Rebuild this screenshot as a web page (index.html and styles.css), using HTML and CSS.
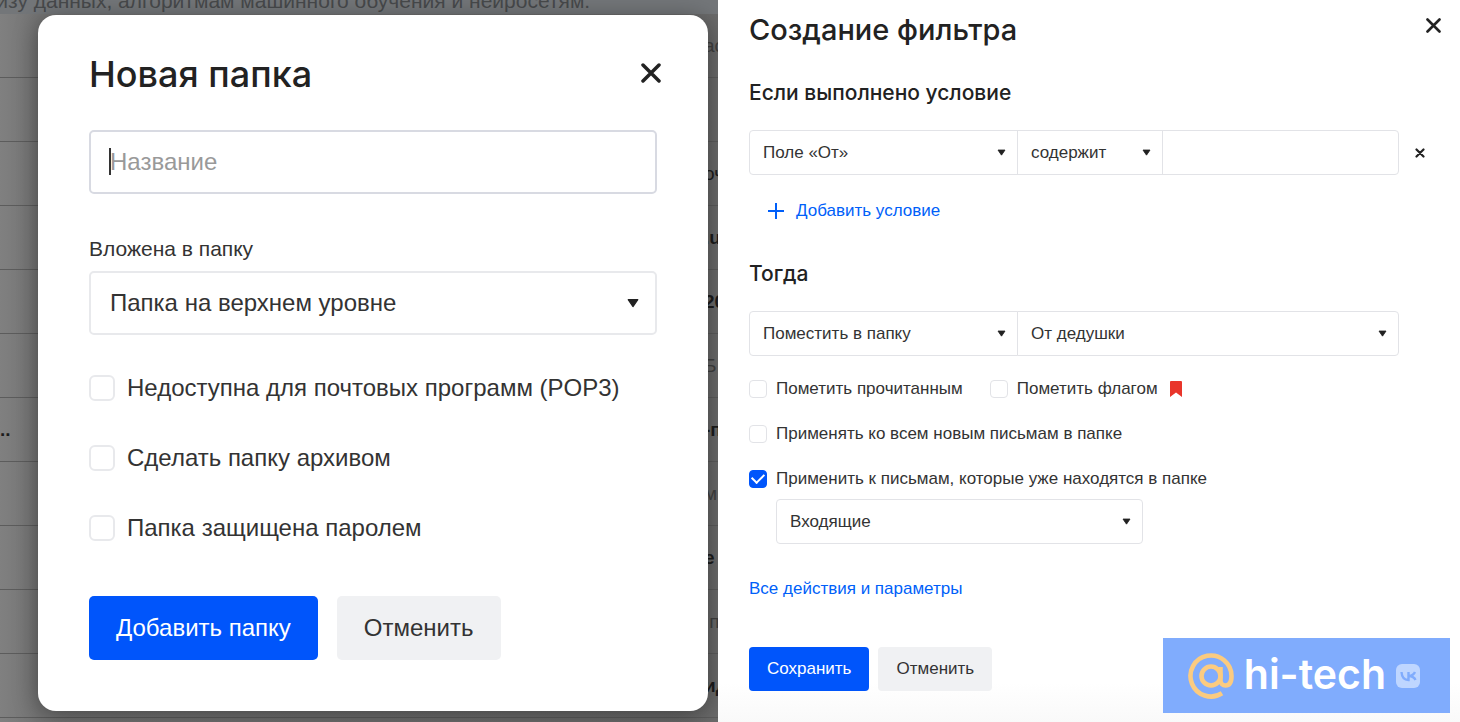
FILE: index.html
```html
<!DOCTYPE html>
<html lang="ru">
<head>
<meta charset="utf-8">
<title>Новая папка и создание фильтра</title>
<link rel="stylesheet" href="styles.css">
</head>
<body>
<svg class="defs" aria-hidden="true">
  <symbol id="arrow" viewBox="0 0 10 8"><path d="M1 1.2h8L5 7z" fill="#222" stroke="#222" stroke-linejoin="round"/></symbol>
  <symbol id="cross" viewBox="0 0 20 20"><path d="M2 2l16 16M18 2l-16 16" fill="none" stroke="#222" stroke-width="3.500" stroke-linecap="round"/></symbol>
  <symbol id="cross-bold" viewBox="0 0 10 10"><path d="M1.500 1.500l7 7M8.500 1.500l-7 7" fill="none" stroke="#222" stroke-width="2.200" stroke-linecap="round"/></symbol>
</svg>
<main class="page">
  <section class="folder">
    <div class="mail" aria-hidden="true">
      <div class="mail-top">лизу данных, алгоритмам машинного обучения и нейросетям.</div>
      <div class="mail-row"><span></span><span class="soft">ас</span></div>
      <div class="mail-row"></div>
      <div class="mail-row"><span></span><span>оч</span></div>
      <div class="mail-row"><span></span><b>.u</b></div>
      <div class="mail-row"><span></span><b>20</b></div>
      <div class="mail-row"><span></span><span class="soft">Б</span></div>
      <div class="mail-row"><b>..</b><b>-п</b></div>
      <div class="mail-row"><span></span><span class="soft">м</span></div>
      <div class="mail-row"><span></span><b>е</b></div>
      <div class="mail-row"><span></span><span class="soft">&nbsp;п</span></div>
      <div class="mail-row"><span></span><b>ид</b></div>
      <div class="mail-row last"></div>
    </div>
    <form class="modal">
      <header class="modal-head">
        <h1 class="modal-title">Новая папка</h1>
        <button class="close" type="button" aria-label="Закрыть"><svg class="cross-large"><use href="#cross"/></svg></button>
      </header>
      <div class="modal-body">
        <div class="name-box">
          <input class="field" type="text" placeholder="Название" aria-label="Название">
          <span class="caret"></span>
        </div>
        <label class="caption" for="parent">Вложена в папку</label>
        <div class="select">
          <select id="parent"><option>Папка на верхнем уровне</option></select>
          <svg class="arrow"><use href="#arrow"/></svg>
        </div>
        <div class="options">
          <label class="check"><input type="checkbox">Недоступна для почтовых программ (POP3)</label>
          <label class="check"><input type="checkbox">Сделать папку архивом</label>
          <label class="check"><input type="checkbox">Папка защищена паролем</label>
        </div>
        <div class="buttons">
          <button class="btn primary" type="button">Добавить папку</button>
          <button class="btn" type="button">Отменить</button>
        </div>
      </div>
    </form>
  </section>

  <section class="filter">
    <form class="filter-form">
      <header class="filter-head">
        <h1 class="filter-title">Создание фильтра</h1>
        <button class="close" type="button" aria-label="Закрыть"><svg class="cross-medium"><use href="#cross"/></svg></button>
      </header>
      <h2 class="subtitle">Если выполнено условие</h2>
      <div class="condition">
        <div class="group three">
          <div class="select">
            <select aria-label="Поле"><option>Поле «От»</option></select>
            <svg class="arrow"><use href="#arrow"/></svg>
          </div>
          <div class="select">
            <select aria-label="Условие"><option>содержит</option></select>
            <svg class="arrow"><use href="#arrow"/></svg>
          </div>
          <div class="value"><input class="field" type="text" aria-label="Значение"></div>
        </div>
        <button class="close" type="button" aria-label="Удалить условие"><svg class="cross-small"><use href="#cross-bold"/></svg></button>
      </div>
      <button class="add" type="button">
        <svg class="plus" viewBox="0 0 16 16"><path d="M8 0v16M0 8h16" stroke="#005ff9" stroke-width="2"/></svg>
        Добавить условие
      </button>
      <h2 class="subtitle then">Тогда</h2>
      <div class="group two">
        <div class="select">
          <select aria-label="Действие"><option>Поместить в папку</option></select>
          <svg class="arrow"><use href="#arrow"/></svg>
        </div>
        <div class="select">
          <select aria-label="Папка"><option>От дедушки</option></select>
          <svg class="arrow"><use href="#arrow"/></svg>
        </div>
      </div>
      <div class="filter-options">
        <div class="pair">
          <label class="check"><input type="checkbox">Пометить прочитанным</label>
          <label class="check"><input type="checkbox">Пометить флагом
            <svg class="flag" viewBox="0 0 12 16"><path d="M1 0h10q1 0 1 1v15l-6-4.500-6 4.500V1q0-1 1-1z" fill="#e9352b"/></svg>
          </label>
        </div>
        <label class="check"><input type="checkbox">Применять ко всем новым письмам в папке</label>
        <label class="check"><input type="checkbox" checked>Применить к письмам, которые уже находятся в папке</label>
      </div>
      <div class="select source">
        <select aria-label="Папка с письмами"><option>Входящие</option></select>
        <svg class="arrow"><use href="#arrow"/></svg>
      </div>
      <a class="more" href="#">Все действия и параметры</a>
      <div class="buttons">
        <button class="btn primary" type="button">Сохранить</button>
        <button class="btn" type="button">Отменить</button>
      </div>
    </form>
    <div class="brand">
      <svg class="brand-at" viewBox="0 0 46 46" fill="none" stroke="#fbcb80" stroke-width="4.600" stroke-linecap="butt">
        <circle cx="23" cy="23" r="9.500"/>
        <path d="M32.500 14v13.500a5 5 0 0 0 5 5q6 0 6-9.500a20.500 20.500 0 1 0-9.500 17.300"/>
      </svg>
      <span class="brand-name">hi-tech</span>
      <svg class="brand-vk" viewBox="0 0 24 24">
        <rect width="24" height="24" rx="6" fill="#bfd6ff"/>
        <path d="M5.500 8q.5 8 7 8V8M19 8q-1.500 3.500-6 4 5 .5 6.500 4" fill="none" stroke="#80acfd" stroke-width="2.400"/>
      </svg>
    </div>
  </section>
</main>
</body>
</html>
```
FILE: styles.css
```css
* { box-sizing: border-box; }

body {
  margin: 0;
  background: #fff;
  color: #333;
  font-family: "Liberation Sans", Arial, sans-serif;
}

h1, h2 {
  margin: 0;
  color: #222;
  font-family: Inter, "Open Sans", sans-serif;
  font-weight: 500;
}

button, input, select { font: inherit; color: inherit; }

.defs { position: absolute; width: 0; height: 0; }

.page {
  display: grid;
  grid-template-columns: 718fr 742fr;
  min-height: 100vh;
}

/* Controls */

.close {
  display: flex;
  padding: 0;
  border: 0;
  background: none;
  cursor: pointer;
}

.cross-large { width: 20px; height: 20px; }
.cross-medium { width: 15px; height: 15px; }
.cross-small { width: 10px; height: 10px; }

.select { position: relative; display: grid; }

.select select,
.field {
  width: 100%;
  min-width: 0;
  height: 45px;
  padding: 0 13px;
  border: 1px solid #e2e3e7;
  border-radius: 4px;
  outline: 0;
  background: #fff;
  appearance: none;
}

.arrow {
  position: absolute;
  top: 50%;
  right: 12px;
  width: 9px;
  height: 7px;
  margin-top: -4px;
  pointer-events: none;
}

.check { display: flex; align-items: center; gap: 9px; }

.check input {
  flex: none;
  width: 18px;
  height: 18px;
  margin: 0;
  border: 1px solid #e2e3e7;
  border-radius: 4px;
  background: #fff;
  appearance: none;
}

.check input:checked {
  display: grid;
  place-items: center;
  border-color: #0055fb;
  background: #0055fb;
}

.check input:checked::after {
  content: "";
  width: 10px;
  height: 6px;
  margin-bottom: 4px;
  border: solid #fff;
  border-width: 0 0 2px 2px;
  rotate: -45deg;
}

.buttons { display: flex; gap: 9px; }

.btn {
  height: 44px;
  padding: 0 18px;
  border: 0;
  border-radius: 4px;
  background: #f0f1f3;
  color: #333;
}

.btn.primary { background: #0055fb; color: #fff; }

/* New folder */

.folder {
  position: relative;
  display: grid;
  padding: 15px 10px 12px 38px;
  overflow: hidden;
  background: #757575;
  font-size: 24px;
}

.mail {
  position: absolute;
  inset: 0;
  overflow: hidden;
  background: linear-gradient(90deg, #808080, #747474 38px, #6a6a6a);
  color: #1c1c1c;
  font-size: 19px;
}

.mail-top {
  height: 14px;
  background: #737679;
  color: #47494b;
  font-size: 21px;
  line-height: 2px;
  text-indent: -16px;
  white-space: nowrap;
}

.mail-row {
  display: grid;
  grid-template-columns: 1fr 14px;
  align-items: center;
  height: 64px;
  border-bottom: 1px solid #5c5c5c;
  white-space: nowrap;
}

.soft { color: #404040; }
.mail-row.last { border: 0; }

.modal {
  position: relative;
  padding: 36px 47px 51px 51px;
  border-radius: 18px;
  background: #fff;
  box-shadow: 0 4px 24px rgba(0, 0, 0, .4);
}

.modal-head {
  display: flex;
  align-items: center;
  justify-content: space-between;
}

.modal-head .close { padding-bottom: 3px; }
.modal-title { font-size: 36px; line-height: 46px; }
.modal-body { display: grid; padding-right: 4px; }

.name-box { position: relative; margin-top: 33px; }

.modal .field,
.modal select { height: 64px; padding: 0 19px; border-width: 2px; border-radius: 5px; }

.modal select { padding-bottom: 2px; border-color: #e8e9ec; }
.modal .field { border-color: #d8dae2; }
.field::placeholder { color: #999; opacity: 1; }

.caret {
  position: absolute;
  top: 18px;
  left: 20px;
  width: 2px;
  height: 27px;
  background: #333;
}

.caption { margin-top: 42px; font-size: 21px; line-height: 26px; }
.modal .select { margin-top: 9px; }
.modal .arrow { right: 18px; width: 12px; height: 10px; margin-top: -5px; }

.options { display: grid; gap: 42px; margin-top: 39px; }
.modal .check { gap: 12px; line-height: 28px; }
.modal .check input { width: 26px; height: 26px; border-width: 2px; border-radius: 6px; border-color: #e8e9ec; }

.modal .buttons { gap: 19px; margin-top: 54px; }
.modal .btn { height: 64px; padding: 0 27px; border-radius: 5px; }

/* Filter */

.filter {
  position: relative;
  padding: 10px 19px 30px 31px;
  background: linear-gradient(0deg, #f9f9f9, #fff 40px);
  font-size: 17px;
}

.filter-head {
  display: flex;
  align-items: flex-start;
  justify-content: space-between;
}

.filter-head .close { padding: 8px 0; }
.filter-title { font-size: 29px; line-height: 40px; }

.subtitle { margin-top: 28px; font-size: 21px; line-height: 30px; }
.subtitle.then { margin-top: 37px; }

.condition {
  display: grid;
  grid-template-columns: 1fr 42px;
  align-items: center;
  margin-top: 22px;
}

.condition .close { justify-content: center; }

.group { display: grid; }
.group > * + * { margin-left: -1px; }
.group.three { grid-template-columns: 269fr 145fr 236fr; }
.group.two { grid-template-columns: 269fr 381fr; margin: 22px 42px 0 0; }

.group > :not(:first-child) > * { border-top-left-radius: 0; border-bottom-left-radius: 0; }
.group > :not(:last-child) > * { border-top-right-radius: 0; border-bottom-right-radius: 0; }

.add {
  display: flex;
  align-items: center;
  gap: 12px;
  margin: 25px 0 0 19px;
  padding: 0;
  border: 0;
  background: none;
  color: #005ff9;
  line-height: 22px;
}

.plus { width: 16px; height: 16px; }

.filter-options { display: grid; gap: 23px; margin-top: 22px; line-height: 22px; }
.pair { display: flex; gap: 27px; }
.flag { width: 12px; height: 16px; margin-left: 3px; }

.source { width: 367px; max-width: 100%; margin: 9px 0 0 27px; }

.more {
  display: inline-block;
  margin-top: 34px;
  color: #005ff9;
  line-height: 22px;
  text-decoration: none;
}

.filter .buttons { margin-top: 47px; }

.brand {
  position: absolute;
  right: 10px;
  bottom: 10px;
  display: flex;
  align-items: center;
  height: 75px;
  padding: 0 30px 0 25px;
  background: #80acfd;
}

.brand-at { width: 46px; height: 46px; }

.brand-name {
  margin: 0 10px 4px;
  color: #fff;
  font: 600 41px Inter, sans-serif;
}

.brand-vk { width: 24px; height: 24px; }
```
